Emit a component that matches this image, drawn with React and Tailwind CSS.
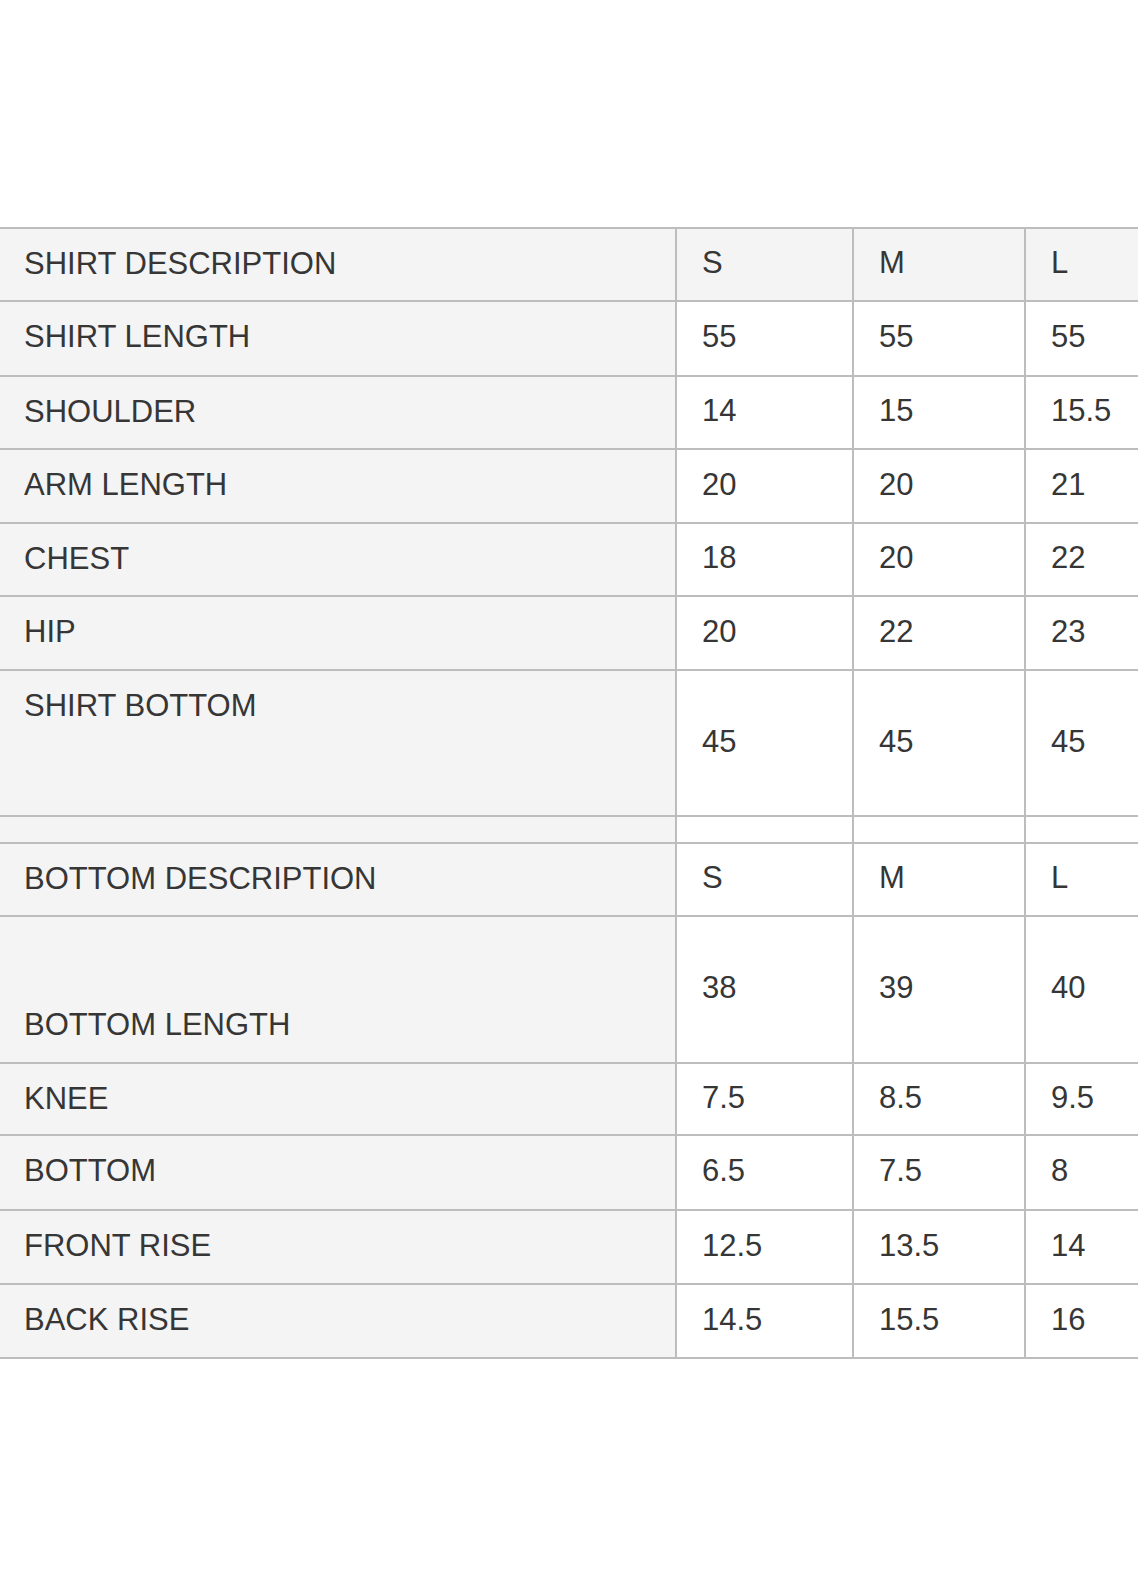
import React from "react";

const rows = [
  { label: "SHIRT DESCRIPTION", v: ["S", "M", "L"], h: "h-[73px]", grayAll: true },
  { label: "SHIRT LENGTH", v: ["55", "55", "55"], h: "h-[75px]" },
  { label: "SHOULDER", v: ["14", "15", "15.5"], h: "h-[73px]" },
  { label: "ARM LENGTH", v: ["20", "20", "21"], h: "h-[74px]" },
  { label: "CHEST", v: ["18", "20", "22"], h: "h-[73px]" },
  { label: "HIP", v: ["20", "22", "23"], h: "h-[74px]" },
  { label: "SHIRT BOTTOM", v: ["45", "45", "45"], h: "h-[146px]" },
  { label: "", v: ["", "", ""], h: "h-[27px]", spacer: true },
  { label: "BOTTOM DESCRIPTION", v: ["S", "M", "L"], h: "h-[73px]" },
  { label: "BOTTOM LENGTH", v: ["38", "39", "40"], h: "h-[147px]", labelPt: "pt-[91px]" },
  { label: "KNEE", v: ["7.5", "8.5", "9.5"], h: "h-[72px]" },
  { label: "BOTTOM", v: ["6.5", "7.5", "8"], h: "h-[75px]" },
  { label: "FRONT RISE", v: ["12.5", "13.5", "14"], h: "h-[74px]" },
  { label: "BACK RISE", v: ["14.5", "15.5", "16"], h: "h-[74px]" },
];

export default function App() {
  return (
    <div
      className="w-[1138px] h-[1584px] bg-white overflow-hidden text-[#363636] text-[31px] leading-[1.117]"
      style={{ fontFamily: '"Liberation Sans", Arial, sans-serif' }}
    >
      <div className="mt-[227px] border-t-2 border-[#bdbdbd] w-full">
        {rows.map((r, i) => {
          const valBg = r.grayAll ? "bg-[#f4f4f4]" : "bg-white";
          const labelAlign = r.labelPt ? r.labelPt : r.spacer ? "" : "pt-[18px]";
          return (
            <div key={i} className={`flex border-b-2 border-[#bdbdbd] ${r.h}`}>
              <div className={`w-[675px] shrink-0 bg-[#f4f4f4] pl-[24px] ${labelAlign}`}>
                {r.label}
              </div>
              <div className={`w-[177px] shrink-0 border-l-2 border-[#bdbdbd] ${valBg} pl-[25px] flex items-center pb-[2px]`}>
                {r.v[0]}
              </div>
              <div className={`w-[172px] shrink-0 border-l-2 border-[#bdbdbd] ${valBg} pl-[25px] flex items-center pb-[2px]`}>
                {r.v[1]}
              </div>
              <div className={`flex-1 border-l-2 border-[#bdbdbd] ${valBg} pl-[25px] flex items-center pb-[2px]`}>
                {r.v[2]}
              </div>
            </div>
          );
        })}
      </div>
    </div>
  );
}
